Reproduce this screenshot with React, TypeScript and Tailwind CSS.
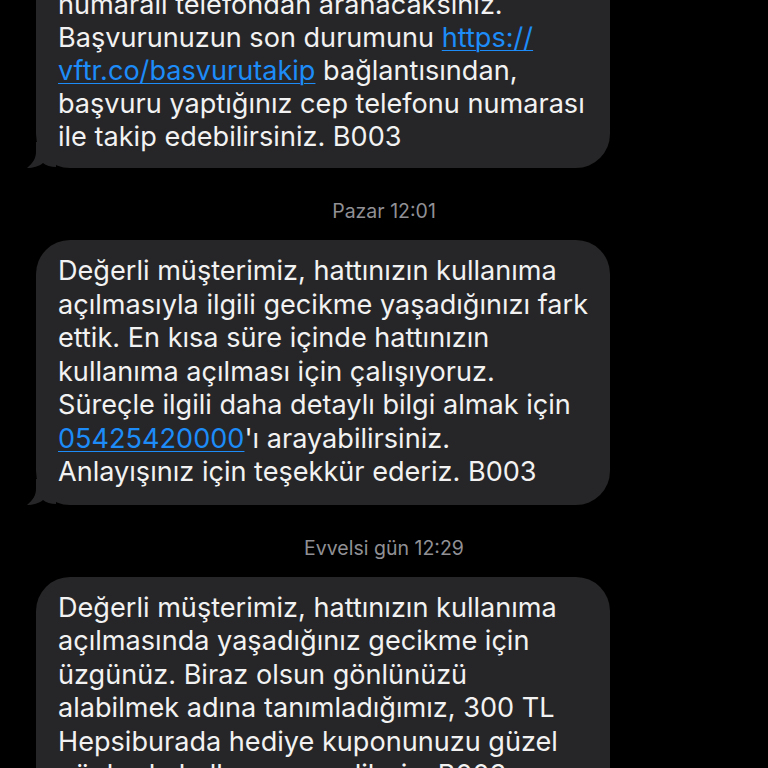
import React from "react";

const font = { fontFamily: "Inter, 'Liberation Sans', Arial, sans-serif" };

function Tail() {
  return (
    <svg
      className="absolute left-[-10px] bottom-0"
      width="30"
      height="26"
      viewBox="0 0 30 26"
    >
      <path
        d="M10 0 L10 10 C10 16 7 21 1 26 C7 26 13 24.5 17 21 C20 23.5 25 25 30 25 L30 0 Z"
        fill="#262628"
      />
    </svg>
  );
}

function Link({ children }: { children: React.ReactNode }) {
  return <span className="text-[#1d8cf8] underline decoration-1 underline-offset-[3px]">{children}</span>;
}

function Bubble({
  lines,
  tail = true,
  className = "",
}: {
  lines: React.ReactNode[];
  tail?: boolean;
  className?: string;
}) {
  return (
    <div className={`relative ml-[36px] w-[574px] rounded-[34px] bg-[#262628] pl-[22px] pr-[14px] ${className}`}>
      {tail && <Tail />}
      <div className="relative text-[27.1px] text-[#f2f2f2]" style={font}>
        {lines.map((l, i) => (
          <div key={i} className="whitespace-nowrap">
            {l}
          </div>
        ))}
      </div>
    </div>
  );
}

function Stamp({ children, className = "" }: { children: React.ReactNode; className?: string }) {
  return (
    <div className={`text-center text-[19.5px] leading-[22px] text-[#909095] ${className}`} style={font}>
      {children}
    </div>
  );
}

export default function App() {
  return (
    <div className="h-[768px] w-[768px] overflow-hidden bg-black">
      <Bubble
        className="mt-[-60px] pt-[15px] pb-[15px] leading-[33px]"
        lines={[
          "0850 222 0 622 numaralı veya 0542 542",
          "numaralı telefondan aranacaksınız.",
          <>Başvurunuzun son durumunu <Link>https://</Link></>,
          <><Link>vftr.co/basvurutakip</Link> bağlantısından,</>,
          "başvuru yaptığınız cep telefonu numarası",
          "ile takip edebilirsiniz. B003",
        ]}
      />
      <Stamp className="mt-[32px] mb-[18px]">Pazar 12:01</Stamp>
      <Bubble
        className="pt-[14px] pb-[16px] leading-[33.5px]"
        lines={[
          "Değerli müşterimiz, hattınızın kullanıma",
          "açılmasıyla ilgili gecikme yaşadığınızı fark",
          "ettik. En kısa süre içinde hattınızın",
          "kullanıma açılması için çalışıyoruz.",
          "Süreçle ilgili daha detaylı bilgi almak için",
          <><Link>05425420000</Link>'ı arayabilirsiniz.</>,
          "Anlayışınız için teşekkür ederiz. B003",
        ]}
      />
      <Stamp className="mt-[32px] mb-[18px]">Evvelsi gün 12:29</Stamp>
      <Bubble
        tail={false}
        className="pt-[14px] pb-[16px] leading-[33.5px]"
        lines={[
          "Değerli müşterimiz, hattınızın kullanıma",
          "açılmasında yaşadığınız gecikme için",
          "üzgünüz. Biraz olsun gönlünüzü",
          "alabilmek adına tanımladığımız, 300 TL",
          "Hepsiburada hediye kuponunuzu güzel",
          "günlerde kullanmanızı dileriz. B003",
        ]}
      />
    </div>
  );
}
